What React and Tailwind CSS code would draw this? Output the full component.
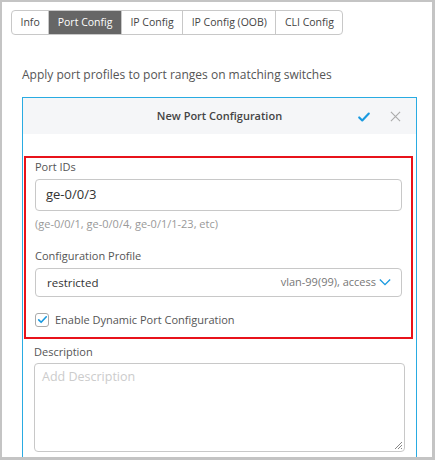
import React from "react";

const tabs = ["Info", "Port Config", "IP Config", "IP Config (OOB)", "CLI Config"];

const CheckIcon = ({ className }) => (
  <svg viewBox="0 0 16 16" className={className} fill="none">
    <path d="M2.5 8.5l3.5 3.5 7.5-8" stroke="currentColor" strokeWidth="2.4" strokeLinecap="round" strokeLinejoin="round" />
  </svg>
);

export default function App() {
  return (
    <div
      className="w-[435px] h-[460px] overflow-hidden bg-white border-t-2 border-l-2 border-r-[3px] border-b-[3px] border-[#c4c4c4] text-[#555]"
      style={{ fontFamily: '"Open Sans", sans-serif' }}
    >
      <div className="pl-[9px] pt-[6px]">
        <div className="inline-flex h-[25px] border border-[#c8c8c8] rounded-[4px] overflow-hidden text-[10.5px] leading-none">
          {tabs.map((t, i) => (
            <div
              key={t}
              className={
                "flex items-center px-[8.5px] " +
                (i > 0 ? "border-l border-[#c8c8c8] " : "") +
                (t === "Port Config" ? "bg-[#666] text-white border-[#555]" : "text-[#444]")
              }
            >
              {t}
            </div>
          ))}
        </div>
      </div>

      <p className="ml-[20px] mt-[32px] text-[12px] leading-[16px] text-[#555]">
        Apply port profiles to port ranges on matching switches
      </p>

      <div className="ml-[20px] mt-[14px] w-[395px] border border-[#29abe2] border-b-0 h-[400px]">
        <div className="h-[36px] bg-[#f5f6f8] flex items-center relative">
          <div className="w-full text-center text-[11px] font-semibold text-[#444]">New Port Configuration</div>
          <CheckIcon className="absolute left-[334px] top-[12px] w-[14px] h-[14px] text-[#1a9ae0]" />
          <svg viewBox="0 0 12 12" className="absolute left-[367px] top-[13px] w-[11px] h-[11px] text-[#aaa]" fill="none">
            <path d="M1 1l10 10M11 1L1 11" stroke="currentColor" strokeWidth="1.2" />
          </svg>
        </div>

        <div className="mt-[22px] mx-[1px] w-[389px] border-2 border-[#e8131b] px-[9px] pt-[1px] pb-[9px]">
          <div className="text-[11px] leading-[16px] text-[#555]">Port IDs</div>
          <div className="mt-[4px] h-[32px] border border-[#c8c8c8] rounded-[4px] flex items-center px-[10px] text-[13px] text-[#333]">
            ge-0/0/3
          </div>
          <div className="mt-[5px] text-[11px] leading-[16px] text-[#999]">(ge-0/0/1, ge-0/0/4, ge-0/1/1-23, etc)</div>

          <div className="mt-[16px] text-[11px] leading-[16px] text-[#555]">Configuration Profile</div>
          <div className="mt-[4px] h-[29px] border border-[#c8c8c8] rounded-[4px] flex items-center pl-[11px] pr-[10px] text-[11px]">
            <span className="text-[#333] flex-1 text-[11.5px]">restricted</span>
            <span className="text-[#777]">vlan-99(99), access</span>
            <svg viewBox="0 0 14 10" className="ml-[3px] w-[12px] h-[9px] text-[#1a9ae0]" fill="none">
              <path d="M1 1.5l6 6 6-6" stroke="currentColor" strokeWidth="1.6" />
            </svg>
          </div>

          <div className="mt-[15px] h-[16px] flex items-center">
            <div className="w-[14px] h-[14px] border border-[#aaa] rounded-[3px] flex items-center justify-center">
              <CheckIcon className="w-[11px] h-[11px] text-[#1a9ae0]" />
            </div>
            <span className="ml-[6px] text-[11px] leading-[16px] text-[#555]">Enable Dynamic Port Configuration</span>
          </div>
        </div>

        <div className="px-[11px]">
          <div className="mt-[5px] text-[11px] leading-[16px] text-[#555]">Description</div>
          <div className="mt-[3px] h-[89px] border border-[#c8c8c8] rounded-[4px] px-[7px] pt-[2px] leading-[18px] relative">
            <span className="text-[12.5px] text-[#ccc]">Add Description</span>
            <svg viewBox="0 0 10 10" className="absolute right-[1px] bottom-[1px] w-[10px] h-[10px] text-[#888]">
              <path d="M9 2L2 9M9 5L5 9M9 8L8 9" stroke="currentColor" strokeWidth="1" />
            </svg>
          </div>
        </div>
      </div>
    </div>
  );
}
